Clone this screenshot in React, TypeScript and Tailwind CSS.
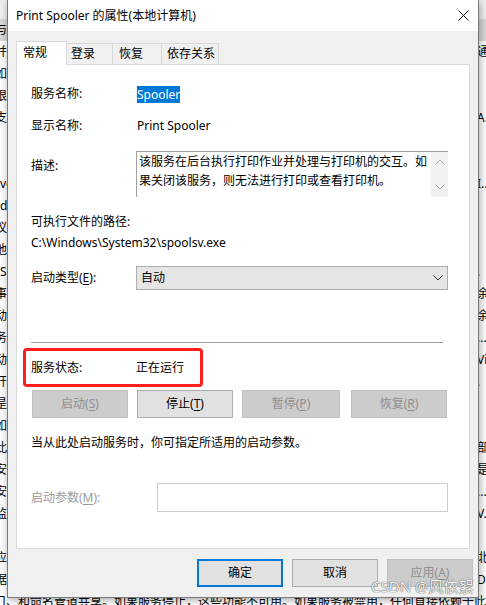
import React from 'react';

// background list rows peeking out around the dialog: [left fragment, right fragment, latin]
const bgRows: [string, string, boolean][] = [
  ['与', '', false],
  ['并', '通.', false],
  ['如', '', false],
  ['根', '', false],
  ['支', 'A...', false],
  ['', '', false],
  ['', '', false],
  ['ve', 'I...', true],
  ['di', '', true],
  ['议', '', false],
  ['他', '', false],
  ['S', '.', true],
  ['事', '余.', false],
  ['动', '余.', false],
  ['务', '...', false],
  ['动', 'Vi.', false],
  ['开', '.', false],
  ['是', '', false],
  ['如', '', false],
  ['此', '部.', false],
  ['安', '是.', false],
  ['安', '...', false],
  ['监', 'V.', false],
  ['', '', false],
  ['应', '北.', false],
  ['据', 'D.', false],
];

function Background() {
  return (
    <div className="absolute inset-0 flex flex-col">
      <div className="h-[19px] shrink-0 bg-[#f0f0f0]" />
      {bgRows.map(([left, right, latin], i) => (
        <div
          key={i}
          className={`h-[22px] shrink-0 flex items-center justify-between whitespace-nowrap ${i === 0 ? 'bg-[#d9d9d9]' : ''}`}
        >
          <span className={latin ? 'ml-0' : '-ml-[5px]'}>{left}</span>
          <span className="w-[9px] overflow-hidden">{right}</span>
        </div>
      ))}
      <div className="h-[22px] shrink-0 -ml-[6px] flex items-center whitespace-nowrap">
        口、和命名管道共享。如果服务停止，这些功能不可用。如果服务被禁用，任何直接依赖于此.
      </div>
    </div>
  );
}

function Key({ children }: { children: React.ReactNode }) {
  return <span className="underline underline-offset-[2px]">{children}</span>;
}

function Chevron({ up, color }: { up?: boolean; color: string }) {
  return (
    <svg width="10" height="6" viewBox="0 0 10 6" fill="none">
      <path d={up ? 'M0.5 5.5 L5 1 L9.5 5.5' : 'M0.5 0.5 L5 5 L9.5 0.5'} stroke={color} strokeWidth="1" />
    </svg>
  );
}

function ActionButton({
  children,
  disabled,
  className,
}: {
  children: React.ReactNode;
  disabled?: boolean;
  className: string;
}) {
  return (
    <div
      className={`h-[28px] flex items-center justify-center border leading-[16px] ${
        disabled ? 'bg-[#cccccc] border-[#bfbfbf] text-[#8f8f8f]' : 'bg-[#e1e1e1] border-[#adadad] text-black'
      } ${className}`}
    >
      {children}
    </div>
  );
}

function Dialog() {
  return (
    <div className="absolute left-[7px] top-0 w-[472px] h-[598px] flex flex-col bg-[#f0f0f0] border-x border-b border-[#7a7a7a] shadow-[1px_2px_8px_rgba(0,0,0,0.35)]">
      {/* title bar */}
      <div className="h-[31px] shrink-0 bg-white flex items-center justify-between pl-[8px] pr-[9px]">
        <span className="leading-[16px]">Print Spooler 的属性(本地计算机)</span>
        <svg width="11" height="11" viewBox="0 0 11 11" fill="none">
          <path d="M0.5 0.5 L10.5 10.5 M10.5 0.5 L0.5 10.5" stroke="#111" strokeWidth="1" />
        </svg>
      </div>

      {/* tabs */}
      <div className="relative z-10 -mb-px mt-[10px] ml-[8px] flex items-end">
        <div className="h-[24px] w-[51px] bg-white border-x border-t border-[#d9d9d9] pl-[6px] pt-[3px] leading-[16px]">
          常规
        </div>
        <div className="mb-px h-[21px] w-[46px] border-t border-r border-[#d9d9d9] pl-[4px] pt-[2px] leading-[16px]">
          登录
        </div>
        <div className="mb-px h-[21px] w-[49px] border-t border-r border-[#d9d9d9] pl-[6px] pt-[2px] leading-[16px]">
          恢复
        </div>
        <div className="mb-px h-[21px] w-[57px] border-t border-r border-[#d9d9d9] pl-[5px] pt-[2px] leading-[16px]">
          依存关系
        </div>
      </div>

      {/* panel */}
      <div className="mx-[8px] h-[485px] shrink-0 bg-white border border-[#d9d9d9] pt-[20px] pl-[14px] pr-[21px] flex flex-col">
        <div className="h-[18px] flex items-center">
          <span className="w-[106px] leading-[16px]">服务名称:</span>
          <span className="h-[17px] bg-[#0078d7] text-white leading-[17px]">Spooler</span>
        </div>

        <div className="mt-[14px] h-[18px] flex items-center">
          <span className="w-[106px] leading-[16px]">显示名称:</span>
          <span className="leading-[16px]">Print Spooler</span>
        </div>

        <div className="mt-[16px] flex items-start">
          <span className="w-[105px] pt-[7px] leading-[16px]">描述:</span>
          <div className="w-[312px] h-[46px] flex border-t border-l border-[#a0a0a0]">
            <div className="flex-1 pl-[2px] leading-[19px] whitespace-nowrap">
              <div>该服务在后台执行打印作业并处理与打印机的交互。如</div>
              <div>果关闭该服务，则无法进行打印或查看打印机。</div>
            </div>
            <div className="w-[17px] bg-[#f0f0f0] flex flex-col items-center justify-between py-[7px]">
              <Chevron up color="#a6a6a6" />
              <Chevron color="#a6a6a6" />
            </div>
          </div>
        </div>

        <div className="mt-[16px] h-[18px] flex items-center leading-[16px]">可执行文件的路径:</div>
        <div className="mt-[3px] h-[18px] flex items-center leading-[16px]">
          {'C:\\Windows\\System32\\spoolsv.exe'}
        </div>

        <div className="mt-[14px] flex items-center">
          <span className="w-[105px] leading-[16px]">
            启动类型(<Key>E</Key>):
          </span>
          <div className="w-[312px] h-[24px] flex items-center justify-between border border-[#adadad] bg-[#e5e5e5] pl-[4px] pr-[4px]">
            <span className="leading-[16px]">自动</span>
            <Chevron color="#333333" />
          </div>
        </div>

        <div className="mt-[52px] h-px w-[412px] bg-[#a0a0a0]" />

        <div className="relative mt-[5px] h-[39px] flex items-center">
          <span className="w-[105px] leading-[16px]">服务状态:</span>
          <span className="leading-[16px]">正在运行</span>
          <div className="absolute -left-[8px] top-0 w-[180px] h-[39px] border-[3px] border-[#ff1f1f] rounded-[4px]" />
        </div>

        <div className="mt-[3px] flex">
          <ActionButton disabled className="ml-px w-[96px]">
            启动(<Key>S</Key>)
          </ActionButton>
          <ActionButton className="ml-[9px] w-[96px]">
            停止(<Key>T</Key>)
          </ActionButton>
          <ActionButton disabled className="ml-[9px] w-[98px]">
            暂停(<Key>P</Key>)
          </ActionButton>
          <ActionButton disabled className="ml-[11px] w-[96px]">
            恢复(<Key>R</Key>)
          </ActionButton>
        </div>

        <div className="mt-[16px] h-[18px] flex items-center leading-[16px]">
          当从此处启动服务时，你可指定所适用的启动参数。
        </div>

        <div className="mt-[31px] flex items-center">
          <span className="w-[126px] leading-[16px] text-[#9a9a9a]">
            启动参数(<Key>M</Key>):
          </span>
          <div className="w-[292px] h-[29px] border border-[#cccccc] bg-white" />
        </div>
      </div>

      {/* dialog buttons */}
      <div className="mt-[10px] flex justify-end gap-[9px] pr-[5px]">
        <div className="h-[28px] w-[86px] flex items-center justify-center border-2 border-[#0078d7] bg-[#e1e1e1] leading-[16px]">
          确定
        </div>
        <div className="h-[28px] w-[86px] flex items-center justify-center border border-[#adadad] bg-[#e1e1e1] leading-[16px]">
          取消
        </div>
        <div className="h-[28px] w-[86px] flex items-center justify-center border border-[#bfbfbf] bg-[#cccccc] text-[#8f8f8f] leading-[16px]">
          应用(<Key>A</Key>)
        </div>
      </div>
    </div>
  );
}

export default function App() {
  return (
    <div className="relative w-[486px] h-[605px] overflow-hidden bg-white text-[12px] text-black font-['Noto_Sans','Noto_Sans_CJK_SC',sans-serif]">
      <Background />
      <Dialog />
      <div className="absolute left-[371px] top-[577px] text-[15px] leading-[18px] whitespace-nowrap text-[#f3f3f3] [text-shadow:0_0_1px_#555555,0_0_1px_#555555]">
        CSDN @风依絮
      </div>
    </div>
  );
}
